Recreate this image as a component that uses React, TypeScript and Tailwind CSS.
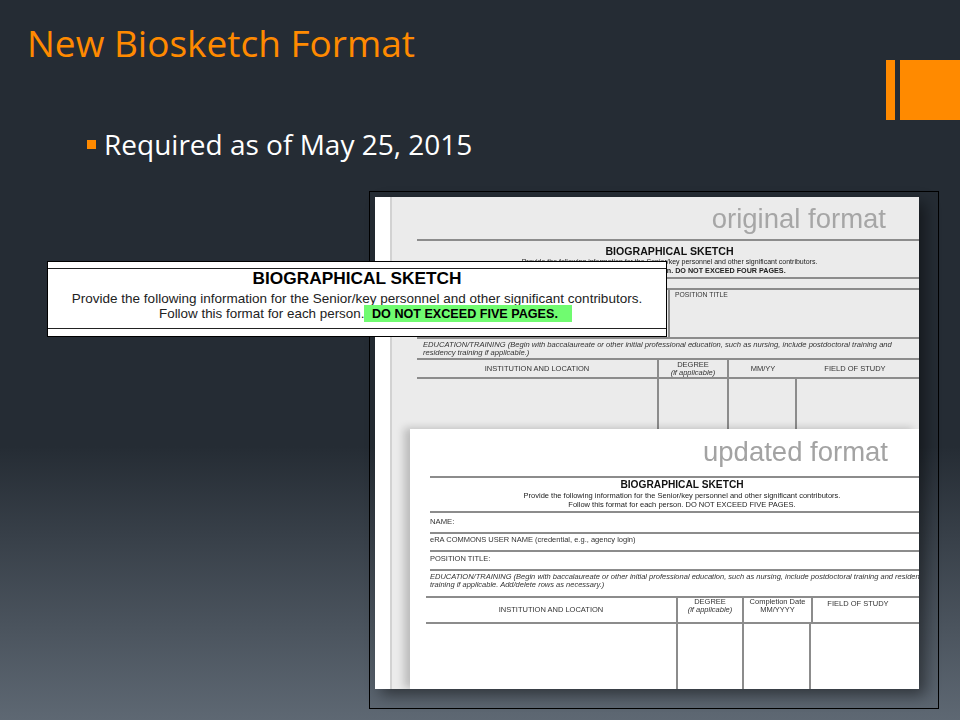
function Rule({ className = '' }: { className?: string }) {
  return <div className={`h-[2px] bg-[#8c8c8c] ${className}`} />
}

function OriginalForm() {
  return (
    <div className="absolute inset-0 flex bg-white">
      <div className="w-[17px] shrink-0 border-r-2 border-[#d2d2d2]" />
      <div className="flex-1 bg-[#ebebeb] pl-[25px] blur-[0.3px]">
        <div className="-ml-[20px] h-[42px] pt-[5px] pr-[33px] text-right text-[27.5px] leading-[34px] text-[#a6a6a6]">original format</div>
        <Rule />
        <div className="-ml-[25px] pl-[28px] text-center leading-[11px] text-[#222]">
          <div className="mt-[5px] text-[10.6px] font-bold text-[#111]">BIOGRAPHICAL SKETCH</div>
          <div className="text-[7px] leading-[10px]">Provide the following information for the Senior/key personnel and other significant contributors.</div>
          <div className="text-[7.2px] font-bold leading-[8px]">Follow this format for each person. DO NOT EXCEED FOUR PAGES.</div>
        </div>
        <Rule className="mt-[2px]" />
        <div className="mt-[9px] flex h-[51px] border-y-2 border-[#8c8c8c]">
          <div className="w-[253px] border-r-2 border-[#8c8c8c]" />
          <div className="pl-[5px] text-[6.8px] leading-[9px] text-[#333]">POSITION TITLE</div>
        </div>
        <div className="ml-[6px] mt-[2px] text-[7.6px] italic leading-[8px] whitespace-nowrap text-[#333]">
          <div>EDUCATION/TRAINING (Begin with baccalaureate or other initial professional education, such as nursing, include postdoctoral training and</div>
          <div>residency training if applicable.)</div>
        </div>
        <div className="mt-[1px] box-content grid h-[17px] grid-cols-[240px_72px_68px_1fr] border-y-2 border-[#8c8c8c] text-center text-[7.5px] leading-[8px] text-[#333]">
          <div className="self-center">INSTITUTION AND LOCATION</div>
          <div className="flex flex-col justify-center border-x-2 border-[#8c8c8c]"><div>DEGREE</div><div className="italic">(if applicable)</div></div>
          <div className="self-center">MM/YY</div>
          <div className="self-center pr-[6px]">FIELD OF STUDY</div>
        </div>
        <div className="grid h-[60px] grid-cols-[240px_72px_68px_1fr]">
          <div />
          <div className="border-x-2 border-[#8c8c8c]" />
          <div className="border-r-2 border-[#8c8c8c]" />
        </div>
      </div>
    </div>
  )
}

function UpdatedForm() {
  return (
    <div className="absolute left-[35px] top-[232px] right-0 bottom-0 bg-white pl-[20px] shadow-[-6px_-1px_8px_rgba(0,0,0,0.2)]">
      <div className="blur-[0.3px]">
        <div className="h-[47px] pt-[6px] pr-[31px] text-right text-[27.5px] leading-[34px] text-[#a3a3a3]">updated format</div>
        <Rule />
        <div className="pl-[15px] text-center text-[#222]">
          <div className="mt-[1px] text-[10.2px] font-bold leading-[12px] text-[#111]">BIOGRAPHICAL SKETCH</div>
          <div className="text-[7.5px] leading-[9px]">Provide the following information for the Senior/key personnel and other significant contributors.</div>
          <div className="text-[7.5px] leading-[9px]">Follow this format for each person. DO NOT EXCEED FIVE PAGES.</div>
        </div>
        <Rule className="mt-[2px]" />
        <div className="h-[19px] pt-[4px] text-[7.7px] leading-[10px] text-[#333]">NAME:</div>
        <Rule />
        <div className="h-[16px] pt-[1px] text-[7.5px] leading-[10px] text-[#333]">eRA COMMONS USER NAME (credential, e.g., agency login)</div>
        <Rule />
        <div className="h-[17px] pt-[2px] text-[7.5px] leading-[10px] text-[#333]">POSITION TITLE:</div>
        <Rule />
        <div className="h-[25px] overflow-hidden pt-[2px] text-[7.5px] italic leading-[8px] text-[#333]">
          <div className="whitespace-nowrap">EDUCATION/TRAINING (Begin with baccalaureate or other initial professional education, such as nursing, include postdoctoral training and residency</div>
          <div>training if applicable. Add/delete rows as necessary.)</div>
        </div>
        <div className="-ml-[4px] box-content grid h-[24px] grid-cols-[250px_68px_67px_1fr] border-y-2 border-[#8c8c8c] text-center text-[7.5px] leading-[8px] text-[#333]">
          <div className="self-center">INSTITUTION AND LOCATION</div>
          <div className="flex flex-col justify-start border-x-2 border-[#8c8c8c]"><div>DEGREE</div><div className="italic">(if applicable)</div></div>
          <div className="flex flex-col justify-start"><div>Completion Date</div><div>MM/YYYY</div></div>
          <div className="border-l-2 border-[#8c8c8c] pt-[2px] pr-[16px]">FIELD OF STUDY</div>
        </div>
        <div className="-ml-[4px] grid h-[66px] grid-cols-[250px_68px_67px_1fr]">
          <div />
          <div className="border-x-2 border-[#8c8c8c]" />
          <div className="border-r-2 border-[#8c8c8c]" />
        </div>
      </div>
    </div>
  )
}

export default function App() {
  return (
    <div
      className="relative h-[720px] w-[960px] overflow-hidden bg-[linear-gradient(180deg,#252c34_0%,#252c34_62%,#5e6873_100%)]"
      style={{ fontFamily: '"Open Sans", "Liberation Sans", sans-serif' }}
    >
      <h1 className="pl-[27px] pt-[20px] text-[37px] font-normal leading-[46px] text-[#ff8a00]">New Biosketch Format</h1>
      <div className="mt-[56px] flex items-center pl-[87px] text-[28px] leading-[44px] text-white">
        <span className="mr-[8px] h-[9px] w-[9px] bg-[#ff8a00]" />
        Required as of May 25, 2015
      </div>

      {/* accent bars on the right edge */}
      <div className="absolute right-0 top-[60px] flex gap-[5px]">
        <div className="h-[60px] w-[9px] bg-[#ff8a00]" />
        <div className="h-[60px] w-[60px] bg-[#ff8a00]" />
      </div>

      {/* picture of both forms */}
      <div className="absolute left-[369px] top-[191px] h-[518px] w-[570px] border border-black p-[5px]">
        <div
          className="relative h-[492px] w-[544px] overflow-hidden shadow-[6px_6px_14px_rgba(0,0,0,0.45)]"
          style={{ fontFamily: '"Liberation Sans", sans-serif' }}
        >
          <OriginalForm />
          <UpdatedForm />
        </div>
      </div>

      {/* enlarged callout */}
      <div
        className="absolute left-[47px] top-[261px] h-[76px] w-[620px] border border-black bg-white pt-[6px] text-center text-[#222]"
        style={{ fontFamily: '"Liberation Sans", sans-serif' }}
      >
        <div className="h-[1px] bg-[#222]" />
        <div className="text-[17.3px] font-bold leading-[18px] text-black">BIOGRAPHICAL SKETCH</div>
        <div className="mt-[5px] text-[13.5px] leading-[14px]">Provide the following information for the Senior/key personnel and other significant contributors.</div>
        <div className="-mt-[1px] flex h-[17px] items-center pl-[111px] text-[13.4px] leading-[14px]">
          <span className="w-[205px] whitespace-nowrap text-left">Follow this format for each person.</span>
          <span className="flex h-[17px] w-[208px] items-center bg-[#70fb70] pl-[8px] text-[12.6px] font-bold text-black">DO NOT EXCEED FIVE PAGES.</span>
        </div>
        <div className="mt-[6px] h-[1px] bg-[#222]" />
      </div>
    </div>
  )
}
